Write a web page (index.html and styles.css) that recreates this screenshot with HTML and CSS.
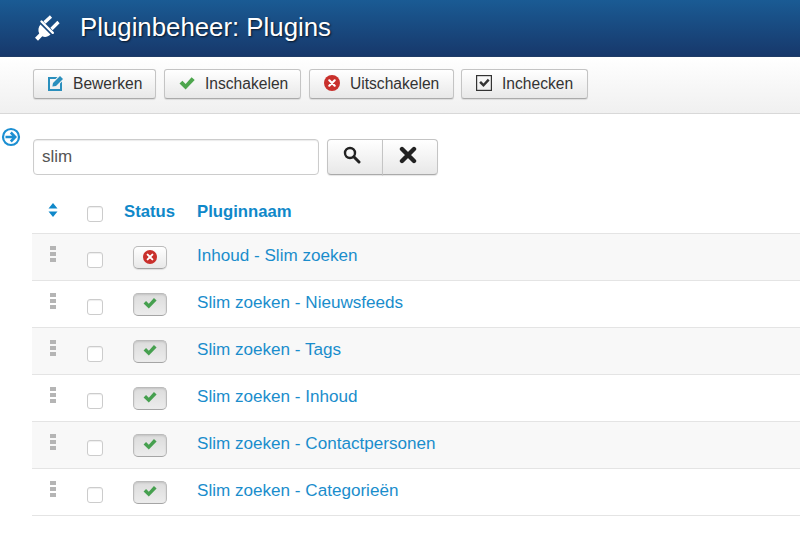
FILE: index.html
```html
<!DOCTYPE html>
<html lang="nl">
<head>
<meta charset="utf-8">
<title>Pluginbeheer: Plugins</title>
<link rel="stylesheet" href="styles.css">
</head>
<body>
<svg class="defs" width="0" height="0" aria-hidden="true">
  <defs>
    <symbol id="check" viewBox="0 0 16 14"><path d="M.5 7.600 3.400 4.700l3.200 3.200L12.600 1.200 15.700 4 6.600 13.400z" fill="currentColor"/></symbol>
    <symbol id="cross" viewBox="0 0 16 16"><circle cx="8" cy="8" r="8" fill="currentColor"/><path d="M5.300 5.300l5.400 5.400M10.700 5.300l-5.400 5.400" stroke="#fff" stroke-width="2.200" stroke-linecap="round"/></symbol>
  </defs>
</svg>
<header class="title-bar">
  <svg class="plug" viewBox="0 0 28 28" aria-hidden="true"><path d="M7.500 10.500 17.500 20.500C15 23 11.800 23.500 9.300 22.300L5 26.700 2 23.700 6.200 19.400C4.800 16.500 5.300 13 7.500 10.500z" fill="#fff"/><path d="M8.500 7.500 19.800 18.800" stroke="#fff" stroke-width="2.400" stroke-linecap="round"/><path d="M11.500 8.500 18 2.500M18.500 15 25.500 8" stroke="#fff" stroke-width="3.200"/></svg>
  <h1 class="page-title">Pluginbeheer: Plugins</h1>
</header>
<nav class="toolbar">
  <button class="btn btn-edit" type="button"><svg class="ico ico-edit" viewBox="0 0 16 16" aria-hidden="true"><path d="M0 2h9.500L7.500 4H2v10h10V8.500l2-2V16H0z" fill="#2a8fbd"/><path d="M5 8 12 1l3 3-7 7-3.600.6z" fill="#2a8fbd"/></svg>Bewerken</button>
  <button class="btn btn-on" type="button"><svg class="ico ico-check"><use href="#check"/></svg>Inschakelen</button>
  <button class="btn btn-off" type="button"><svg class="ico ico-cross"><use href="#cross"/></svg>Uitschakelen</button>
  <button class="btn btn-in" type="button"><svg class="ico ico-box" viewBox="0 0 16 16" aria-hidden="true"><rect x=".6" y=".6" width="14.800" height="14.800" fill="none" stroke="#333" stroke-width="1.200"/><path d="M3.200 7.800 5 6l2.500 2.500L11.800 3.800 13.600 5.500 7.500 12z" fill="#333"/></svg>Inchecken</button>
</nav>
<main class="content">
  <svg class="toggle" viewBox="0 0 20 20" aria-hidden="true"><circle cx="10" cy="10" r="8" fill="none" stroke="#1c8fd2" stroke-width="2.200"/><path d="M4.500 10h9M9.800 5.500 14.200 10l-4.400 4.500" fill="none" stroke="#1c8fd2" stroke-width="2.600"/></svg>
  <form class="search">
    <input class="search-input" type="text" value="slim" aria-label="Zoeken">
    <div class="search-btns">
      <button class="sbtn sbtn-find" type="button" aria-label="Zoeken"><svg class="sico" viewBox="0 0 18 18"><circle cx="7" cy="7" r="5" fill="none" stroke="#222" stroke-width="2.400"/><path d="M10.800 10.800 16 16" stroke="#222" stroke-width="3" stroke-linecap="round"/></svg></button>
      <button class="sbtn sbtn-clear" type="button" aria-label="Wissen"><svg class="sico" viewBox="0 0 18 18"><path d="M3 3l12 12M15 3 3 15" stroke="#222" stroke-width="4.400" stroke-linecap="round"/></svg></button>
    </div>
  </form>
  <table class="plugins">
    <thead>
      <tr>
        <th class="c-sort"><svg class="sort" viewBox="0 0 10 14" aria-hidden="true"><path d="M5 0l4.500 5.500H.5zM5 14 .5 8.500h9z" fill="#0f88c9"/></svg></th>
        <th class="c-check"><span class="cb"></span></th>
        <th class="c-status">Status</th>
        <th class="c-name">Pluginnaam</th>
      </tr>
    </thead>
    <tbody>
      <tr>
        <td class="c-sort"><span class="grip"></span></td>
        <td class="c-check"><span class="cb"></span></td>
        <td class="c-status"><span class="state"><svg class="ico-state-x"><use href="#cross"/></svg></span></td>
        <td class="c-name"><a href="#">Inhoud - Slim zoeken</a></td>
      </tr>
      <tr>
        <td class="c-sort"><span class="grip"></span></td>
        <td class="c-check"><span class="cb"></span></td>
        <td class="c-status"><span class="state active"><svg class="ico-state-c"><use href="#check"/></svg></span></td>
        <td class="c-name"><a href="#">Slim zoeken - Nieuwsfeeds</a></td>
      </tr>
      <tr>
        <td class="c-sort"><span class="grip"></span></td>
        <td class="c-check"><span class="cb"></span></td>
        <td class="c-status"><span class="state active"><svg class="ico-state-c"><use href="#check"/></svg></span></td>
        <td class="c-name"><a href="#">Slim zoeken - Tags</a></td>
      </tr>
      <tr>
        <td class="c-sort"><span class="grip"></span></td>
        <td class="c-check"><span class="cb"></span></td>
        <td class="c-status"><span class="state active"><svg class="ico-state-c"><use href="#check"/></svg></span></td>
        <td class="c-name"><a href="#">Slim zoeken - Inhoud</a></td>
      </tr>
      <tr>
        <td class="c-sort"><span class="grip"></span></td>
        <td class="c-check"><span class="cb"></span></td>
        <td class="c-status"><span class="state active"><svg class="ico-state-c"><use href="#check"/></svg></span></td>
        <td class="c-name"><a href="#">Slim zoeken - Contactpersonen</a></td>
      </tr>
      <tr>
        <td class="c-sort"><span class="grip"></span></td>
        <td class="c-check"><span class="cb"></span></td>
        <td class="c-status"><span class="state active"><svg class="ico-state-c"><use href="#check"/></svg></span></td>
        <td class="c-name"><a href="#">Slim zoeken - Categorieën</a></td>
      </tr>
    </tbody>
  </table>
</main>
</body>
</html>
```
FILE: styles.css
```css
* { box-sizing: border-box; }
html, body { margin: 0; padding: 0; height: 100%; overflow: hidden; background: #fff; }
body { font-family: "Liberation Sans", Arial, sans-serif; color: #333; }
.defs { position: absolute; }

.title-bar {
  height: 57px;
  display: flex;
  align-items: center;
  padding-left: 33px;
  background: linear-gradient(#1a5b94, #17386b);
  border-bottom: 1px solid #1f3c66;
}
.plug { width: 28px; height: 28px; flex: none; }
.page-title {
  margin: -2px 0 0 19px;
  font-size: 25.8px;
  font-weight: 400;
  color: #fff;
  text-shadow: 1px 1px 2px rgba(0,0,0,.7);
}

.toolbar {
  height: 57px;
  display: flex;
  align-items: flex-start;
  padding: 12px 0 0 33px;
  background: linear-gradient(#fff, #f0f0f0);
  border-bottom: 1px solid #d8d8d8;
}
.btn {
  height: 30px;
  display: inline-flex;
  align-items: center;
  padding: 0;
  border: 1px solid #c4c4c4;
  border-bottom-color: #aaa;
  border-radius: 3px;
  background: linear-gradient(#fff, #e8e8e8);
  box-shadow: 0 1px 1px rgba(0,0,0,.1);
  font: 15.6px "Liberation Sans", Arial, sans-serif;
  color: #333;
}
.btn-edit { width: 123px; margin-right: 8px; padding-left: 14px; }
.btn-on { width: 137px; margin-right: 8px; padding-left: 14px; }
.btn-off { width: 145px; margin-right: 7px; padding-left: 14px; }
.btn-in { width: 127px; padding-left: 14px; }
.ico { flex: none; display: block; }
.ico-edit { width: 16px; height: 16px; margin-right: 9px; margin-top: -3px; }
.ico-check { width: 16px; height: 14px; margin-right: 10px; margin-top: -3px; color: #4da64d; }
.ico-cross { width: 16px; height: 16px; margin-right: 10px; margin-top: -2px; color: #c9302c; }
.ico-box { width: 16px; height: 16px; margin-right: 10px; margin-top: -3px; }

.content { position: relative; padding: 25px 0 0 32px; }
.toggle { position: absolute; left: 1px; top: 13px; width: 20px; height: 20px; }

.search { display: flex; margin: 0 0 16px 1px; }
.search-input {
  width: 286px;
  height: 36px;
  padding: 0 8px;
  border: 1px solid #ccc;
  border-radius: 4px;
  box-shadow: inset 0 1px 1px rgba(0,0,0,.08);
  font: 17px "Liberation Sans", Arial, sans-serif;
  color: #555;
  background: #fff;
}
.search-btns { display: flex; margin-left: 8px; }
.sbtn {
  width: 56px;
  height: 36px;
  display: flex;
  align-items: center;
  justify-content: center;
  padding: 0 0 4px;
  border: 1px solid #c4c4c4;
  border-bottom-color: #aaa;
  background: linear-gradient(#fff, #e8e8e8);
  box-shadow: 0 1px 1px rgba(0,0,0,.1);
}
.sbtn-find { border-radius: 4px 0 0 4px; padding-right: 6px; }
.sbtn-clear { width: 56px; margin-left: -1px; border-radius: 0 4px 4px 0; padding-right: 4px; }
.sico { width: 18px; height: 18px; display: block; }

.plugins { width: 768px; border-collapse: collapse; table-layout: fixed; font-size: 17.1px; }
.plugins th, .plugins td { padding: 0; text-align: left; border-bottom: 1.500px solid #e4e4e4; }
.plugins thead tr { height: 42px; }
.plugins tbody tr { height: 47px; }
.plugins tbody tr:nth-child(odd) { background: #f8f8f8; }
.plugins th { color: #0f88c9; font-weight: 700; font-size: 16.7px; }
.plugins td.c-name { padding-bottom: 2px; }
.plugins a { color: #1a8dcc; text-decoration: none; }
.c-sort { width: 40px; text-align: center; }
.c-check { width: 52px; }
.c-status { width: 73px; }
.sort { width: 10px; height: 14px; display: block; margin: 0 0 4px 16px; }
.cb {
  display: block;
  width: 16px;
  height: 16px;
  margin: 4px 0 0 15px;
  border: 1px solid #ccc;
  border-radius: 3px;
  background: #fff;
  box-shadow: inset 0 1px 1px rgba(0,0,0,.07);
}
td .cb { margin-top: 6px; }
.grip {
  display: block;
  width: 6px;
  height: 16px;
  margin: -6px 0 0 18px;
  background: repeating-linear-gradient(#b5b5b5 0 4px, transparent 4px 6px);
}
.state {
  display: flex;
  align-items: center;
  justify-content: center;
  width: 34px;
  height: 23px;
  margin: 1px 0 0 9px;
  border: 1px solid #bbb;
  border-bottom-color: #a5a5a5;
  border-radius: 5px;
  background: linear-gradient(#fff, #e8e8e8);
  box-shadow: 0 1px 1px rgba(0,0,0,.1);
}
.state.active { background: linear-gradient(#dcdcdc, #ececec); box-shadow: inset 0 1px 2px rgba(0,0,0,.12); }
.ico-state-x { width: 14px; height: 14px; margin-top: -1px; color: #c9302c; }
.ico-state-c { width: 14px; height: 12px; margin: -2px 1px 0 0; color: #46a04f; }
```
